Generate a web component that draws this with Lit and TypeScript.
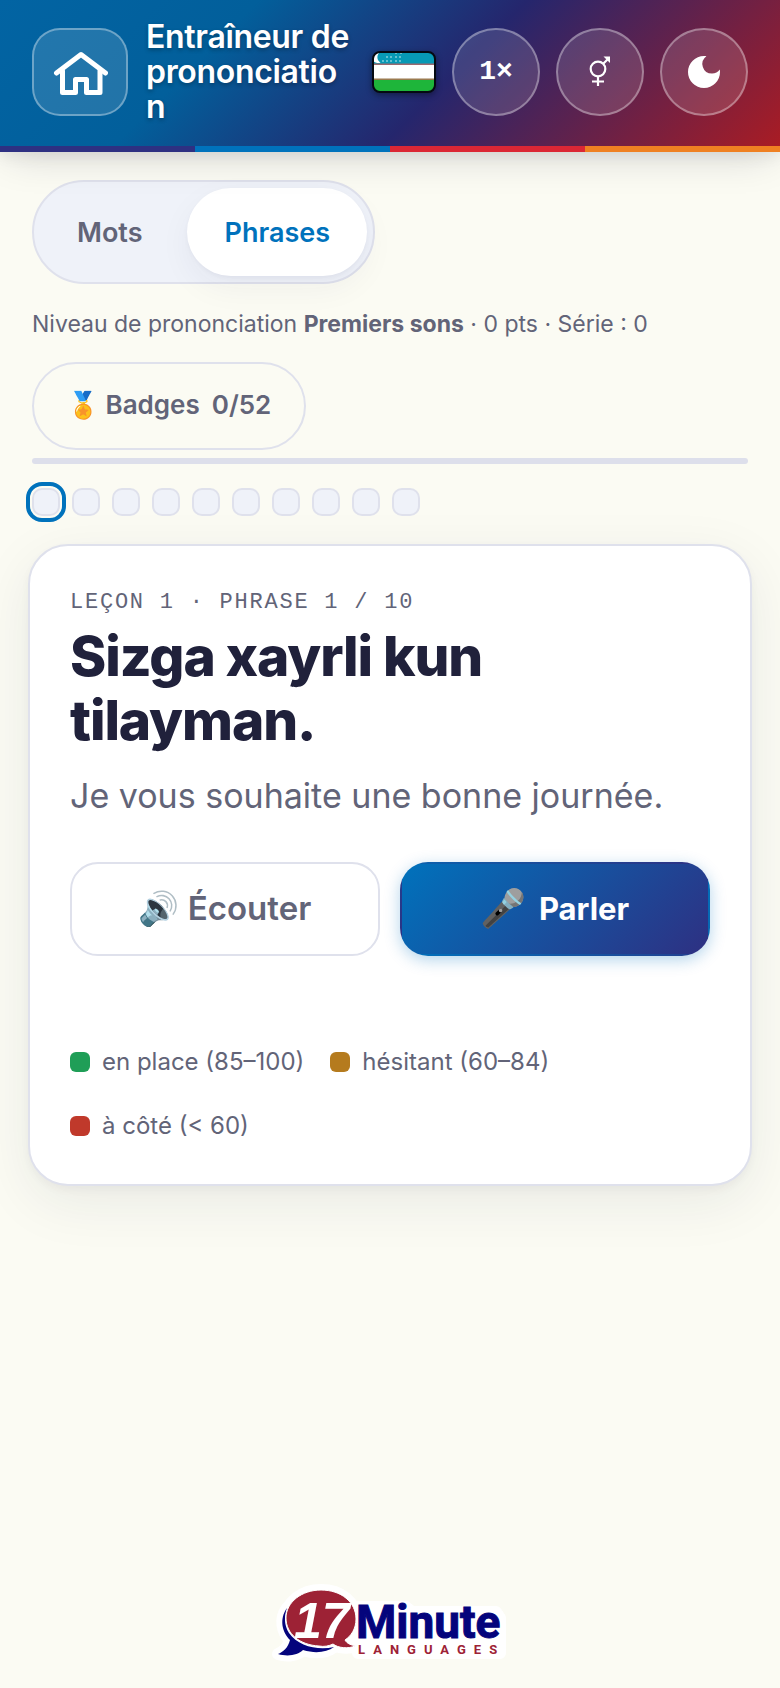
import { LitElement, html, css, svg } from "lit";
import { customElement, property, state } from "lit/decorators.js";
import { classMap } from "lit/directives/class-map.js";

const palette = css`
  :host {
    --blue: #0072bc;
    --indigo: #2e3082;
    --ink: #20213b;
    --muted: #626478;
    --line: #dfe1ec;
    --soft: #eff2f9;
    --paper: #fbfbf3;
  }
  * {
    box-sizing: border-box;
  }
  button {
    font: inherit;
    margin: 0;
    cursor: pointer;
  }
`;

@customElement("trainer-header")
class TrainerHeader extends LitElement {
  static styles = [
    palette,
    css`
      :host {
        display: block;
        position: relative;
        box-shadow: 0 8px 40px -8px rgba(20, 20, 50, 0.2), 0 2px 16px rgba(20, 20, 50, 0.08);
      }
      .bar {
        display: flex;
        align-items: center;
        gap: 16px;
        padding: 19px 32px 22px;
        background: linear-gradient(135deg, #0264a3 0%, #025f9b 28%, #25266d 57%, #a91c24 100%);
        color: #fff;
      }
      .home,
      .round {
        flex: none;
        display: grid;
        place-items: center;
        height: 88px;
        padding: 0;
        color: #fff;
        background: rgba(255, 255, 255, 0.13);
        border: 2px solid rgba(255, 255, 255, 0.34);
      }
      .home {
        width: 96px;
        border-radius: 28px;
      }
      .round {
        width: 88px;
        border-radius: 50%;
        font: 700 28px "Liberation Mono", monospace;
      }
      .title {
        flex: 1;
        min-width: 0;
        margin: 0;
        padding: 0 2px;
        font-size: 32px;
        line-height: 35px;
        font-weight: 600;
        letter-spacing: -0.01em;
        overflow-wrap: anywhere;
        text-shadow: 0 2px 4px rgba(0, 0, 0, 0.3);
      }
      .flag {
        flex: none;
        display: block;
        filter: drop-shadow(0 2px 3px rgba(0, 0, 0, 0.4));
      }
      .stripe {
        display: grid;
        grid-template-columns: repeat(4, 1fr);
        height: 6px;
      }
      .indigo {
        background: var(--indigo);
      }
      .blue {
        background: var(--blue);
      }
      .red {
        background: #db2735;
      }
      .orange {
        background: #ef8022;
      }
    `,
  ];

  render() {
    const stars = [
      [24, 2], [29, 2],
      [15, 6], [19, 6], [24, 6], [28, 6],
      [11, 10], [15, 10], [19, 10], [24, 10], [28, 10],
    ];
    return html`
      <header>
        <div class="bar">
          <a class="home" href="#" aria-label="Accueil">
            <svg width="56" height="56" viewBox="0 0 56 56" fill="none" stroke="currentColor"
              stroke-width="5" stroke-linecap="round" stroke-linejoin="round">
              <path d="M4.5 29 29 10.500 53.500 29" />
              <path d="M10.500 27V48.500H23.500V35.500H34.500V48.500H48V27" />
            </svg>
          </a>
          <h1 class="title">Entraîneur de prononciation</h1>
          <svg class="flag" width="64" height="42" viewBox="0 0 64 42" role="img" aria-label="Ouzbékistan">
            <defs><clipPath id="flag-shape"><rect x="1" y="1" width="62" height="40" rx="7" /></clipPath></defs>
            <g clip-path="url(#flag-shape)">
              <rect width="64" height="42" fill="#fff" />
              <rect width="64" height="13" fill="#0799b5" />
              <rect y="12.500" width="64" height="1.500" fill="#9a6a70" />
              <rect y="27.500" width="64" height="1.500" fill="#9a7a50" />
              <rect y="29" width="64" height="13" fill="#1eb53a" />
              <path d="M8.500 1A5.800 5.800 0 1 0 8.500 11.500A6 6 0 0 1 8.500 1Z" fill="#fff" />
              ${stars.map(([x, y]) => svg`<circle cx=${x} cy=${y} r="0.8" fill="#d8f2f6" />`)}
            </g>
            <rect x="1" y="1" width="62" height="40" rx="7" fill="none" stroke="#050a12" stroke-width="2" />
          </svg>
          <button class="round" aria-label="Vitesse">1×</button>
          <button class="round" aria-label="Voix">
            <svg width="32" height="32" viewBox="0 0 32 32" fill="none" stroke="currentColor" stroke-width="2.200">
              <circle cx="14" cy="13" r="7.300" />
              <path d="M14 20.500V30M8 25.500H20M19.200 7.800 24.500 2.500" />
              <path d="M19.500 .5H26V7Z" fill="currentColor" stroke="none" />
            </svg>
          </button>
          <button class="round" aria-label="Mode sombre">
            <svg width="32" height="32" viewBox="3 3 18 18" fill="currentColor">
              <path d="M12 3a9 9 0 1 0 9 9c0-.46-.04-.92-.1-1.360a5.389 5.389 0 0 1-4.400 2.260 5.403 5.403 0 0 1-3.140-9.800C12.920 3.040 12.460 3 12 3z" />
            </svg>
          </button>
        </div>
        <div class="stripe">
          <span class="indigo"></span><span class="blue"></span><span class="red"></span><span class="orange"></span>
        </div>
      </header>
    `;
  }
}

@customElement("mode-tabs")
class ModeTabs extends LitElement {
  @property() active = "Phrases";

  static styles = [
    palette,
    css`
      :host {
        display: flex;
      }
      .tabs {
        display: flex;
        gap: 8px;
        padding: 6px;
        border: 2px solid var(--line);
        border-radius: 52px;
        background: var(--soft);
      }
      .tab {
        height: 88px;
        padding: 0 37px;
        border: 0;
        border-radius: 44px;
        background: none;
        color: var(--muted);
        font-size: 27px;
        font-weight: 600;
      }
      .on {
        background: #fff;
        color: var(--blue);
        box-shadow: 0 2px 4px rgba(30, 32, 70, 0.04), 0 12px 32px rgba(30, 32, 70, 0.05);
      }
    `,
  ];

  render() {
    return html`<div class="tabs" role="tablist">
      ${["Mots", "Phrases"].map(
        (name) => html`<button
          class=${classMap({ tab: true, on: name === this.active })}
          role="tab"
          aria-selected=${name === this.active}
          @click=${() => (this.active = name)}
        >${name}</button>`
      )}
    </div>`;
  }
}

@customElement("phrase-card")
class PhraseCard extends LitElement {
  static styles = [
    palette,
    css`
      :host {
        display: block;
      }
      .card {
        padding: 40px;
        border: 2px solid var(--line);
        border-radius: 40px;
        background: #fff;
        box-shadow: 0 4px 8px rgba(30, 32, 60, 0.04), 0 16px 56px rgba(30, 32, 60, 0.08);
      }
      .step {
        margin: 0;
        font-family: "Liberation Mono", monospace;
        font-size: 22px;
        line-height: 34px;
        letter-spacing: 0.08em;
        text-transform: uppercase;
        color: var(--muted);
      }
      .phrase {
        margin: 4px 0 0;
        font-size: 55px;
        line-height: 64px;
        font-weight: 800;
        letter-spacing: -0.02em;
        color: var(--ink);
      }
      .meaning {
        margin: 17px 0 0;
        font-size: 34px;
        line-height: 54px;
        color: var(--muted);
      }
      .actions {
        display: grid;
        grid-template-columns: 1fr 1fr;
        gap: 20px;
        margin-top: 39px;
      }
      .action {
        display: flex;
        align-items: center;
        justify-content: center;
        gap: 8px;
        height: 94px;
        padding: 0 0 2px;
        border: 2px solid var(--line);
        border-radius: 28px;
        background: #fff;
        color: var(--muted);
        font-size: 33px;
        font-weight: 600;
      }
      .speak {
        gap: 12px;
        border-color: transparent;
        background: linear-gradient(135deg, var(--blue), var(--indigo));
        color: #fff;
        font-size: 31px;
        font-weight: 700;
        box-shadow: 0 4px 16px rgba(0, 114, 188, 0.3);
      }
      .emoji {
        font-family: "Noto Color Emoji", sans-serif;
        font-size: 33px;
        font-weight: 400;
      }
      .mic {
        font-size: 37px;
      }
      .legend {
        display: flex;
        flex-wrap: wrap;
        gap: 28px 26px;
        margin: 88px 0 0;
        padding: 0;
        list-style: none;
        font-size: 24px;
        line-height: 36px;
        color: var(--muted);
      }
      .entry {
        display: flex;
        align-items: center;
        gap: 12px;
      }
      .swatch {
        width: 20px;
        height: 20px;
        border-radius: 6px;
      }
      .good {
        background: #1f9e57;
      }
      .fair {
        background: #b57b1e;
      }
      .poor {
        background: #c0392b;
      }
    `,
  ];

  render() {
    return html`<section class="card">
      <p class="step">Leçon 1 · Phrase 1 / 10</p>
      <h2 class="phrase">Sizga xayrli kun tilayman.</h2>
      <p class="meaning">Je vous souhaite une bonne journée.</p>
      <div class="actions">
        <button class="action"><span class="emoji">🔊</span>Écouter</button>
        <button class="action speak"><span class="emoji mic">🎤</span>Parler</button>
      </div>
      <ul class="legend">
        <li class="entry"><span class="swatch good"></span>en place (85–100)</li>
        <li class="entry"><span class="swatch fair"></span>hésitant (60–84)</li>
        <li class="entry"><span class="swatch poor"></span>à côté (&lt; 60)</li>
      </ul>
    </section>`;
  }
}

@customElement("brand-logo")
class BrandLogo extends LitElement {
  static styles = css`
    :host {
      display: block;
    }
    .logo {
      display: block;
    }
    .number {
      font: italic 700 50px "Liberation Sans", sans-serif;
      fill: #fff;
    }
    .name {
      font: 700 46px Roboto, sans-serif;
      fill: #04047c;
      stroke: #04047c;
      stroke-width: 1px;
    }
    .sub {
      font: 700 13px Roboto, sans-serif;
      letter-spacing: 8px;
      fill: #9d2235;
    }
    .halo {
      fill: #fff;
      stroke: #fff;
      stroke-width: 12px;
      stroke-linejoin: round;
    }
  `;

  render() {
    const red = "M43 0C63 0 78 12 78 29C78 39 73 46 67 50C69 54 74 55 77 56C70 59 60 58 55 54C51 56 46 57 41 56C22 55 8 44 8 28C8 12 24 0 43 0Z";
    const blue = "M9 18C1 29 4 42 12 50C10 58 5 62 0 64C10 67 20 65 25 60C38 64 49 62 56 57C40 61 20 56 11 43C6 35 6 26 9 18Z";
    return html`<svg class="logo" width="240" height="84" viewBox="-8 -10 240 84" role="img" aria-label="17 Minute Languages">
      <path class="halo" d="${red}" />
      <path class="halo" d="${blue}" />
      <path class="halo" d="M80 17H128L134 22H218L222 28V63H80Z" />
      <path d="${blue}" fill="#04047c" />
      <path d="${red}" fill="#9d2235" stroke="#fff" stroke-width="1" />
      <text class="number" x="16" y="48">17</text>
      <text class="name" x="78" y="48">Minute</text>
      <text class="sub" x="80" y="64">LANGUAGES</text>
    </svg>`;
  }
}

@customElement("app-root")
class AppRoot extends LitElement {
  @state() current = 0;

  static styles = [
    palette,
    css`
      :host {
        display: flex;
        flex-direction: column;
        min-height: 100vh;
        background: var(--paper);
        color: var(--ink);
        font-family: Inter, sans-serif;
      }
      .content {
        padding: 28px 32px 0;
      }
      .status {
        margin: 22px 0 0;
        font-size: 23px;
        line-height: 36px;
        color: var(--muted);
      }
      .badges {
        display: flex;
        align-items: center;
        gap: 12px;
        height: 88px;
        margin-top: 20px;
        padding: 0 33px 3px;
        border: 2px solid var(--line);
        border-radius: 44px;
        background: none;
        color: var(--muted);
        font-size: 26px;
        font-weight: 600;
      }
      .track {
        height: 6px;
        margin-top: 8px;
        border-radius: 3px;
        background: #dddfeb;
      }
      .dots {
        display: flex;
        flex-wrap: wrap;
        gap: 12px;
        margin: 24px 0 28px;
      }
      .dot {
        width: 28px;
        height: 28px;
        padding: 0;
        border: 2px solid var(--line);
        border-radius: 10px;
        background: var(--soft);
      }
      .here {
        outline: 4px solid var(--blue);
        outline-offset: 2px;
      }
      .card {
        margin: 0 -4px;
      }
      .foot {
        display: flex;
        justify-content: center;
        margin-top: auto;
        padding: 40px 0 24px;
      }
    `,
  ];

  render() {
    return html`
      <trainer-header></trainer-header>
      <main class="content">
        <mode-tabs></mode-tabs>
        <p class="status">Niveau de prononciation <b>Premiers sons</b> · 0 pts · Série : 0</p>
        <button class="badges"><span>🏅 Badges</span><span>0/52</span></button>
        <div class="track" role="progressbar" aria-valuenow="0" aria-valuemin="0" aria-valuemax="10" aria-label="Progression"></div>
        <div class="dots">
          ${Array.from({ length: 10 }, (_, i) => html`<button
            class=${classMap({ dot: true, here: i === this.current })}
            aria-label=${`Phrase ${i + 1}`}
            @click=${() => (this.current = i)}
          ></button>`)}
        </div>
        <phrase-card class="card"></phrase-card>
      </main>
      <footer class="foot"><brand-logo></brand-logo></footer>
    `;
  }
}
